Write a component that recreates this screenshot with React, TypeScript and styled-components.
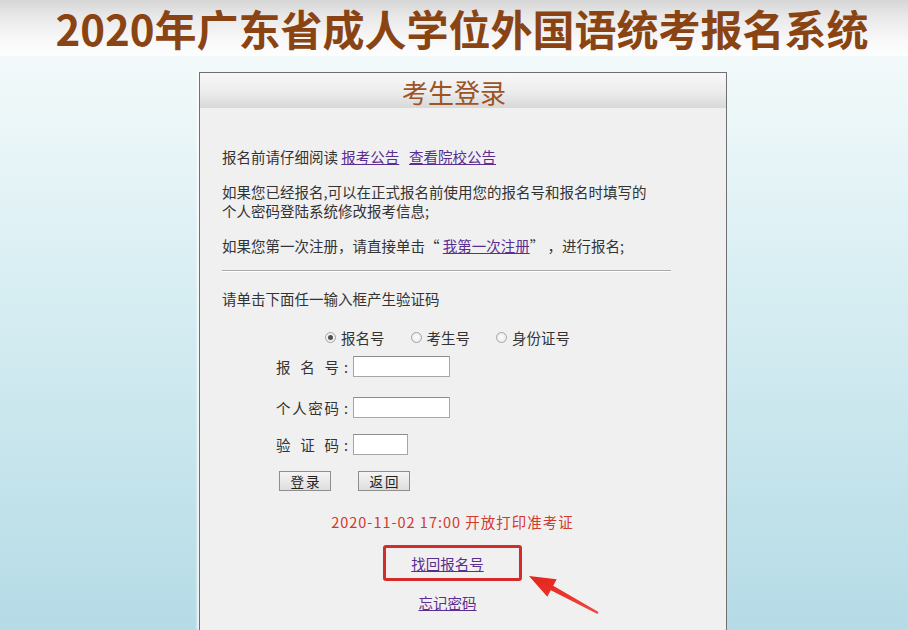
import React from "react";
import styled, { createGlobalStyle } from "styled-components";

const Global = createGlobalStyle`
  html, body { margin: 0; padding: 0; }
  body {
    width: 908px;
    height: 630px;
    overflow: hidden;
    font-family: "Noto Sans CJK SC", "Noto Sans", sans-serif;
  }
`;

const Page = styled.div`
  width: 908px;
  height: 630px;
  overflow: hidden;
  display: flex;
  flex-direction: column;
  background: linear-gradient(180deg, #f8fcfd 0px, #f1f9fa 70px, #d6edf2 300px, #b5dbe6 630px);
`;

const TitleBand = styled.header`
  height: 56px;
  flex: none;
  display: flex;
  align-items: center;
  justify-content: center;
  padding-left: 16px;
  background: linear-gradient(180deg, #d6d6d6 0%, #e9e9e9 30%, #f8f8f8 70%, #fdfefe 100%);
`;

const Title = styled.h1`
  margin: 0;
  font-size: 42px;
  line-height: 54px;
  font-weight: 700;
  white-space: nowrap;
  color: #8a4414;
`;

const Panel = styled.section`
  position: relative;
  flex: 1;
  margin: 16px 0 0 199px;
  width: 528px;
  box-sizing: border-box;
  border: 1px solid #707070;
  border-bottom: none;
  display: flex;
  flex-direction: column;
  box-shadow: -2px 0 2px rgba(255, 255, 255, 0.8);
`;

const PanelHead = styled.div`
  height: 35px;
  flex: none;
  display: flex;
  align-items: center;
  justify-content: center;
  padding-right: 18px;
  background: linear-gradient(180deg, #f8f8f8 0%, #ececec 55%, #d8d8d8 100%);
`;

const PanelTitle = styled.h2`
  margin: 0;
  padding-top: 2px;
  font-size: 26px;
  font-weight: 400;
  line-height: 1;
  color: #9c5424;
`;

const Body = styled.div`
  flex: 1;
  background: #f0f0f0;
  padding: 39px 43px 0 22px;
  display: flex;
  flex-direction: column;
  color: #333;
  font-size: 14.5px;
  line-height: 19px;
`;

const Para = styled.p<{ $gap?: number }>`
  margin: ${(p) => p.$gap ?? 0}px 0 0;
`;

const Link = styled.a`
  color: #5a2d91;
  text-decoration: underline;
  cursor: pointer;
`;

const Rule = styled.hr`
  margin: 15px 12px 0 0;
  height: 0;
  border: 0;
  border-top: 1px solid #a9a9a9;
  border-bottom: 1px solid #ffffff;
`;

const RadioRow = styled.div`
  margin-top: 19.5px;
  padding-left: 103px;
  height: 20px;
  display: flex;
  align-items: center;
  gap: 26px;
`;

const RadioItem = styled.label`
  display: flex;
  align-items: center;
  gap: 5px;
`;

const RadioDot = styled.span<{ $checked?: boolean }>`
  width: 11px;
  height: 11px;
  box-sizing: border-box;
  border-radius: 50%;
  border: 1px solid #a4a4a4;
  background: radial-gradient(circle, #ffffff 0%, #e4e4e4 100%);
  display: flex;
  align-items: center;
  justify-content: center;
  &::after {
    content: "";
    width: 5px;
    height: 5px;
    border-radius: 50%;
    background: ${(p) => (p.$checked ? "#505050" : "transparent")};
  }
`;

const FieldRow = styled.div<{ $gap: number }>`
  margin-top: ${(p) => p.$gap}px;
  padding-left: 54px;
  height: 21px;
  display: flex;
  align-items: center;
`;

const LabelText = styled.span`
  width: 63px;
  display: flex;
  justify-content: space-between;
`;

const Colon = styled.span`
  width: 14px;
  text-align: center;
`;

const TextInput = styled.input<{ $w: number }>`
  width: ${(p) => p.$w}px;
  height: 21px;
  box-sizing: border-box;
  border: 1px solid #a6a6a6;
  border-top-color: #8c8c8c;
  background: #fff;
  padding: 0 2px;
  outline: none;
`;

const ButtonRow = styled.div`
  margin-top: 16px;
  padding-left: 57px;
  display: flex;
  gap: 27px;
`;

const Button = styled.button`
  width: 52px;
  height: 20px;
  box-sizing: border-box;
  padding: 0;
  border: 1px solid #8e8e8e;
  background: linear-gradient(180deg, #f4f4f4 0%, #dedede 100%);
  font-family: inherit;
  font-size: 13.5px;
  line-height: 18px;
  letter-spacing: 2px;
  text-indent: 2px;
  color: #222;
`;

const Notice = styled.p`
  margin: 20.5px 0 0;
  text-align: center;
  color: #d23a2c;
  letter-spacing: 1px;
`;

const Highlight = styled.div`
  margin: 14.5px auto 0;
  width: 139px;
  height: 36px;
  box-sizing: border-box;
  border: 3px solid #d42b2b;
  border-radius: 3px;
  display: flex;
  align-items: center;
  justify-content: center;
  padding-right: 10px;
`;

const Centered = styled.p`
  margin: 11.5px 0 0;
  text-align: center;
  padding-right: 10px;
`;

const Arrow = styled.svg`
  position: absolute;
  left: 327px;
  top: 498px;
  width: 75px;
  height: 46px;
  overflow: visible;
`;

const Label: React.FC<{ text: string }> = ({ text }) => (
  <>
    <LabelText>
      {text.split("").map((c, i) => (
        <span key={i}>{c}</span>
      ))}
    </LabelText>
    <Colon>:</Colon>
  </>
);

export default function App() {
  return (
    <>
      <Global />
      <Page>
        <TitleBand>
          <Title>2020年广东省成人学位外国语统考报名系统</Title>
        </TitleBand>
        <Panel>
          <PanelHead>
            <PanelTitle>考生登录</PanelTitle>
          </PanelHead>
          <Body>
            <Para>
              报名前请仔细阅读 <Link>报考公告</Link>&nbsp;&nbsp;&nbsp;<Link>查看院校公告</Link>
            </Para>
            <Para $gap={16}>
              如果您已经报名,可以在正式报名前使用您的报名号和报名时填写的
              <br />
              个人密码登陆系统修改报考信息;
            </Para>
            <Para $gap={16}>
              如果您第一次注册，请直接单击“ <Link>我第一次注册</Link>” ，进行报名;
            </Para>
            <Rule />
            <Para $gap={16.5}>请单击下面任一输入框产生验证码</Para>
            <RadioRow>
              <RadioItem>
                <RadioDot $checked />
                报名号
              </RadioItem>
              <RadioItem>
                <RadioDot />
                考生号
              </RadioItem>
              <RadioItem>
                <RadioDot />
                身份证号
              </RadioItem>
            </RadioRow>
            <FieldRow $gap={9}>
              <Label text="报名号" />
              <TextInput $w={97} />
            </FieldRow>
            <FieldRow $gap={20}>
              <Label text="个人密码" />
              <TextInput $w={97} type="password" />
            </FieldRow>
            <FieldRow $gap={16}>
              <Label text="验证码" />
              <TextInput $w={55} />
            </FieldRow>
            <ButtonRow>
              <Button>登录</Button>
              <Button>返回</Button>
            </ButtonRow>
            <Notice>2020-11-02 17:00 开放打印准考证</Notice>
            <Highlight>
              <Link>找回报名号</Link>
            </Highlight>
            <Centered>
              <Link>忘记密码</Link>
            </Centered>
          </Body>
          <Arrow viewBox="0 0 75 46">
            <defs>
              <linearGradient id="arrowGrad" x1="0" y1="0" x2="1" y2="1">
                <stop offset="0" stopColor="#e3231c" />
                <stop offset="1" stopColor="#f0473c" />
              </linearGradient>
            </defs>
            <polygon
              points="2,5 29.7,8.2 26.2,14.8 71.5,41.1 70.5,42.9 23.8,19.2 20.3,25.8"
              fill="url(#arrowGrad)"
            />
          </Arrow>
        </Panel>
      </Page>
    </>
  );
}
